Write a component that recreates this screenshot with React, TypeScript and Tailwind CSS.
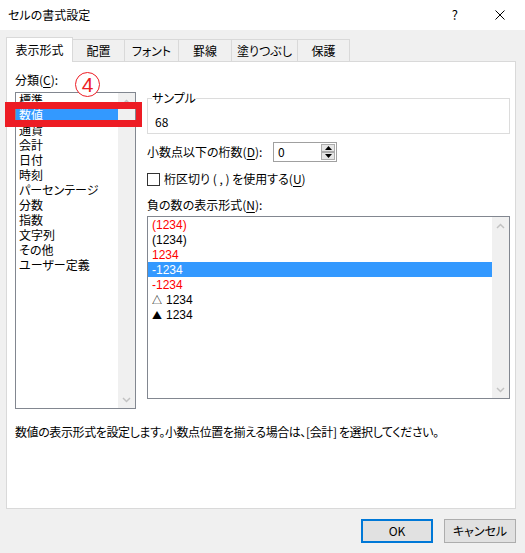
import React from 'react';

const categories = ['標準', '数値', '通貨', '会計', '日付', '時刻', 'パーセンテージ', '分数', '指数', '文字列', 'その他', 'ユーザー定義'];

const negatives = [
  { mark: '', text: '(1234)', cls: 'text-[#ff0000]' },
  { mark: '', text: '(1234)', cls: 'text-black' },
  { mark: '', text: '1234', cls: 'text-[#ff0000]' },
  { mark: '', text: '-1234', cls: 'bg-[#3399ff] text-white' },
  { mark: '', text: '-1234', cls: 'text-[#ff0000]' },
  { mark: '△', text: '1234', cls: 'text-black' },
  { mark: '▲', text: '1234', cls: 'text-black' },
];

const tabs = [
  { label: '配置', w: 'w-[52px]' },
  { label: 'フォント', w: 'w-[54px]' },
  { label: '罫線', w: 'w-[53px]' },
  { label: '塗りつぶし', w: 'w-[66px]' },
  { label: '保護', w: 'w-[52px]' },
];

const listFont = "font-['Liberation_Sans','Noto_Sans_CJK_JP',sans-serif]";

function U({ children }: { children: React.ReactNode }) {
  return <span className="underline underline-offset-[2px]">{children}</span>;
}

function Chevron({ up }: { up?: boolean }) {
  return (
    <svg width="9" height="6" viewBox="0 0 9 6" fill="none">
      <polyline
        points={up ? '1,5 4.5,1.5 8,5' : '1,1 4.5,4.5 8,1'}
        stroke="#c2c2c2"
        strokeWidth="1.5"
      />
    </svg>
  );
}

function ScrollBar() {
  return (
    <div className="w-[17px] bg-[#f0f0f0] flex flex-col justify-between">
      <div className="h-[17px] flex items-center justify-center">
        <Chevron up />
      </div>
      <div className="h-[17px] flex items-center justify-center">
        <Chevron />
      </div>
    </div>
  );
}

function SpinArrow({ up }: { up?: boolean }) {
  return (
    <div className="flex-1 bg-[#e5e5e5] border border-[#acacac] flex items-center justify-center">
      <svg width="7" height="4" viewBox="0 0 7 4">
        <polygon points={up ? '0,4 3.5,0 7,4' : '0,0 3.5,4 7,0'} fill="#000" />
      </svg>
    </div>
  );
}

export default function App() {
  return (
    <div className="relative w-[525px] h-[553px] bg-[#f0f0f0] text-[12px] text-black font-['Noto_Sans_CJK_JP','Noto_Sans',sans-serif] [font-feature-settings:'palt'] overflow-hidden">
      {/* Title bar */}
      <div className="h-[30px] bg-white flex items-center pl-[8px] pr-[20px]">
        <span className="leading-[16px]">セルの書式設定</span>
        <span className="ml-auto text-[13px] leading-[16px]">?</span>
        <svg className="ml-[37px]" width="10" height="10" viewBox="0 0 10 10">
          <path d="M0.5 0.5 L9.5 9.5 M9.5 0.5 L0.5 9.5" stroke="#000" strokeWidth="1" />
        </svg>
      </div>

      <div className="pl-[6px]">
        {/* Tabs */}
        <div className="mt-[7px] h-[24px] flex items-end">
          <div className="relative z-10 -mb-px w-[67px] h-[25px] bg-white border border-b-0 border-[#d9d9d9] flex items-center justify-center leading-[16px]">
            表示形式
          </div>
          {tabs.map((t) => (
            <div
              key={t.label}
              className={`${t.w} h-[22px] border-t border-r border-[#d9d9d9] flex items-center justify-center leading-[16px]`}
            >
              {t.label}
            </div>
          ))}
        </div>

        {/* Panel */}
        <div className="w-[510px] h-[448px] bg-white border border-[#d9d9d9] pl-[8px] pt-[10px]">
          <div className="flex">
            {/* Category column */}
            <div className="w-[121px]">
              <div className="h-[16px] leading-[16px]">
                分類(<U>C</U>):
              </div>
              <div className="mt-[4px] h-[317px] border border-[#828790] flex">
                <div className={`flex-1 ${listFont}`}>
                  {categories.map((c, i) => (
                    <div
                      key={c}
                      className={`h-[15px] leading-[16px] pl-[3px] ${i === 1 ? 'bg-[#3399ff] text-white' : ''}`}
                    >
                      {c}
                    </div>
                  ))}
                </div>
                <ScrollBar />
              </div>
            </div>

            {/* Right column */}
            <div className="ml-[11px] w-[363px]">
              <fieldset className="mt-[18px] border border-[#dcdcdc]">
                <legend className="ml-[4px] leading-[16px]">サンプル</legend>
                <div className="h-[27px] pt-[8px] pl-[7px] leading-[16px]">68</div>
              </fieldset>

              <div className="mt-[8px] h-[20px] flex items-center">
                <div className="w-[126px] leading-[16px]">
                  小数点以下の桁数(<U>D</U>):
                </div>
                <div className="w-[64px] h-[20px] border border-[#a0a0a0] flex">
                  <div className="flex-1 pl-[4px] leading-[18px]">0</div>
                  <div className="w-[15px] flex flex-col py-[1px] pr-[1px]">
                    <SpinArrow up />
                    <SpinArrow />
                  </div>
                </div>
              </div>

              <div className="mt-[9px] h-[16px] flex items-center">
                <div className="w-[13px] h-[13px] border border-[#333333] bg-white" />
                <span className="ml-[4px] leading-[16px]">
                  桁区切り ( , ) を使用する(<U>U</U>)
                </span>
              </div>

              <div className="mt-[10px] h-[16px] leading-[16px]">
                負の数の表示形式(<U>N</U>):
              </div>

              <div className="mt-[3px] h-[183px] border border-[#828790] flex">
                <div className={`flex-1 ${listFont}`}>
                  {negatives.map((n, i) => (
                    <div key={i} className={`h-[15px] leading-[16px] pl-[4px] flex items-center ${n.cls}`}>
                      {n.mark && (
                        <span className="font-['Noto_Sans_CJK_JP',sans-serif] text-[10px] mr-[4px]">{n.mark}</span>
                      )}
                      <span>{n.text}</span>
                    </div>
                  ))}
                </div>
                <ScrollBar />
              </div>
            </div>
          </div>

          <div className="mt-[15px] leading-[16px] tracking-[-0.4px]">
            数値の表示形式を設定します。小数点位置を揃える場合は、[会計] を選択してください。
          </div>
        </div>

        {/* Buttons */}
        <div className="mt-[10px] w-[510px] flex justify-end gap-[11px]">
          <button className="w-[72px] h-[24px] bg-[#e1e1e1] border-2 border-[#0078d7] leading-[16px]">OK</button>
          <button className="w-[72px] h-[24px] bg-[#e1e1e1] border border-[#adadad] leading-[16px]">キャンセル</button>
        </div>
      </div>

      {/* Annotation: red frame and circled 4 */}
      <div className="absolute left-[5px] top-[102px] w-[137px] h-[25px] border-[#ed1c24] border-t-[7px] border-b-[7px] border-l-[10px] border-r-[6px]" />
      <div className="absolute left-[75px] top-[72px] w-[25px] h-[25px] rounded-full border-[1.5px] border-[#ed1c24] bg-white flex items-center justify-center">
        <span className="font-['Liberation_Sans',sans-serif] text-[21px] leading-none text-[#ed1c24]">4</span>
      </div>
    </div>
  );
}
